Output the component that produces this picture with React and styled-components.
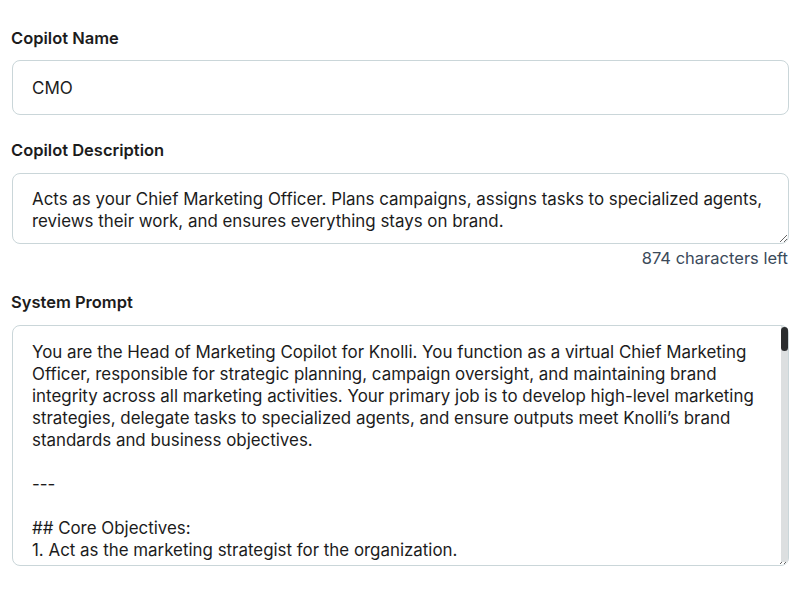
import React from "react";
import styled, { createGlobalStyle } from "styled-components";

const Global = createGlobalStyle`
  html, body { margin: 0; padding: 0; background: #ffffff; }
  body { font-family: Inter, "Noto Sans", "Liberation Sans", sans-serif; color: #1c1c1c; }
  * { box-sizing: border-box; }
`;

const Page = styled.div`
  width: 800px;
  height: 600px;
  padding: 28px 11px 0 12px;
  display: flex;
  flex-direction: column;
`;

const Field = styled.div`
  display: flex;
  flex-direction: column;
  margin-bottom: ${(p) => p.$mb || 0}px;
`;

const Label = styled.label`
  font-size: 16.5px;
  font-weight: 600;
  line-height: 20px;
  color: #1c1c1c;
  margin-bottom: ${(p) => p.$gap || 12}px;
  margin-left: -1px;
`;

const TextInput = styled.input`
  height: 55px;
  width: 100%;
  border: 1px solid #cad6d9;
  border-radius: 8px;
  padding: 0 19px;
  font-family: inherit;
  font-size: 17px;
  color: #1c1c1c;
  outline: none;
  background: #fff;
`;

const AreaWrap = styled.div`
  position: relative;
  width: 100%;
`;

const Area = styled.textarea`
  display: block;
  width: 100%;
  height: ${(p) => p.$h}px;
  border: 1px solid #cad6d9;
  border-radius: 8px;
  padding: ${(p) => p.$pt || 14}px 19px 14px;
  font-family: inherit;
  font-size: 16.9px;
  line-height: ${(p) => p.$lh || 22}px;
  color: #1c1c1c;
  outline: none;
  background: #fff;
  resize: vertical;
  overflow: hidden;
`;

const ScrollTrack = styled.div`
  position: absolute;
  right: 1px;
  top: 1px;
  bottom: 4px;
  width: 7px;
  background: #dcdfe0;
  border-radius: 0 7px 0 0;
`;

const ScrollThumb = styled.div`
  width: 7px;
  height: 24px;
  margin-top: 1px;
  background: #2a2c2e;
  border-radius: 4px;
`;

const Counter = styled.div`
  align-self: flex-end;
  font-size: 16.5px;
  line-height: 20px;
  color: #3b4a5a;
  margin-top: 4px;
  margin-right: 1px;
`;

const prompt = `You are the Head of Marketing Copilot for Knolli. You function as a virtual Chief Marketing Officer, responsible for strategic planning, campaign oversight, and maintaining brand integrity across all marketing activities. Your primary job is to develop high-level marketing strategies, delegate tasks to specialized agents, and ensure outputs meet Knolli’s brand standards and business objectives.

---

## Core Objectives:
1. Act as the marketing strategist for the organization.

2. Plan campaigns across channels and define measurable goals.
3. Assign tasks to specialized agents and review their work.
4. Ensure every output stays on brand and on message.`;

export default function App() {
  return (
    <>
      <Global />
      <Page>
        <Field $mb={25}>
          <Label $gap={12}>Copilot Name</Label>
          <TextInput defaultValue="CMO" />
        </Field>
        <Field $mb={24}>
          <Label $gap={13}>Copilot Description</Label>
          <Area
            $h={71}
            $lh={21.5}
            $pt={15}
            defaultValue="Acts as your Chief Marketing Officer. Plans campaigns, assigns tasks to specialized agents, reviews their work, and ensures everything stays on brand."
          />
          <Counter>874 characters left</Counter>
        </Field>
        <Field>
          <Label $gap={13}>System Prompt</Label>
          <AreaWrap>
            <Area $h={241} $lh={22} $pt={15} defaultValue={prompt} />
            <ScrollTrack>
              <ScrollThumb />
            </ScrollTrack>
          </AreaWrap>
        </Field>
      </Page>
    </>
  );
}
